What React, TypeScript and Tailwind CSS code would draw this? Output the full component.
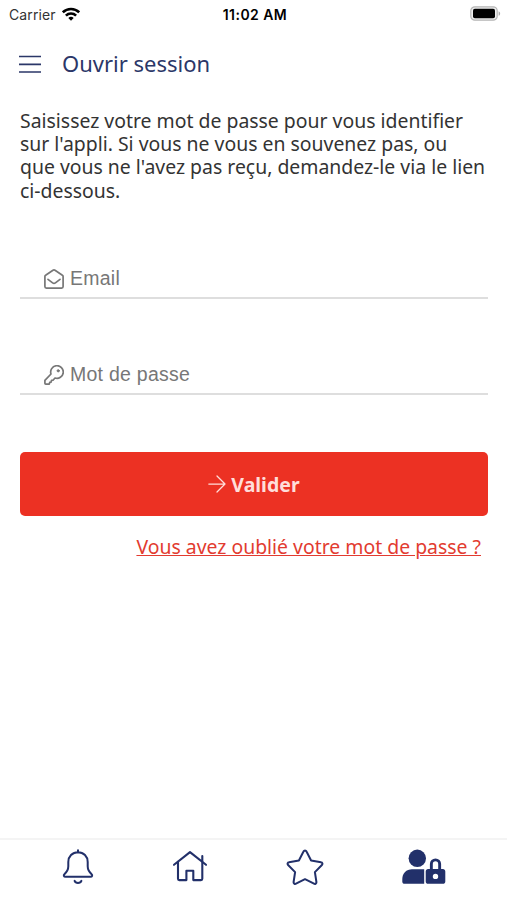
import React, { useState } from 'react';

interface IconProps {
    className?: string;
}

const MenuIcon: React.FC<IconProps> = ({ className }) => (
    <svg viewBox="0 0 22 18" className={className} fill="none" stroke="currentColor" strokeWidth="1.7">
        <path d="M0 1.500h22M0 9.400h22M0 17h22" />
    </svg>
);

const WifiIcon: React.FC<IconProps> = ({ className }) => (
    <svg viewBox="0 0 18 14" className={className} fill="none" stroke="currentColor" strokeWidth="2.6">
        <path d="M.8 5.3a11.8 11.8 0 0 1 16.4 0M3.9 8.6a7.3 7.3 0 0 1 10.2 0" />
        <path d="M9 13.8 6.3 11a3.9 3.9 0 0 1 5.4 0Z" fill="currentColor" stroke="none" />
    </svg>
);

const BatteryIcon: React.FC<IconProps> = ({ className }) => (
    <svg viewBox="0 0 31 15" className={className}>
        <rect x=".8" y=".8" width="26.4" height="13.4" rx="4" fill="#eee" stroke="#b5b5b5" strokeWidth="1.2" />
        <rect x="3" y="2.8" width="22" height="9.4" rx="1.8" fill="#000" />
        <path d="M28.6 5.2c2 .8 2 3.8 0 4.6z" fill="#aaa" />
    </svg>
);

const EnvelopeIcon: React.FC<IconProps> = ({ className }) => (
    <svg viewBox="0 0 20 20" className={className} fill="none" stroke="currentColor" strokeWidth="1.7" strokeLinecap="round" strokeLinejoin="round">
        <path d="M.9 7.6c0-.6.2-1 .7-1.3L9 1.200c.6-.4 1.400-.4 2 0l7.400 5.100c.5.300.7.700.7 1.300v10c0 .9-.6 1.500-1.500 1.500H2.400c-.9 0-1.500-.6-1.500-1.500z" />
        <path d="m4 10.300 4.600 3.600c.9.700 1.900.700 2.800 0l4.600-3.600" />
    </svg>
);

const KeyIcon: React.FC<IconProps> = ({ className }) => (
    <svg viewBox="0 0 20 20" className={className} fill="none" stroke="currentColor" strokeWidth="1.7" strokeLinecap="round" strokeLinejoin="round">
        <path d="M7 9A6.300 6.300 0 1 1 11 13l-2 2.200-1.500.2-.4 1.700-1.400.3-.4 1.700H1.700a.8.8 0 0 1-.8-.8v-2.900z" />
        <circle cx="14.200" cy="5.800" r="1.100" fill="currentColor" strokeWidth="1" />
    </svg>
);

const ArrowIcon: React.FC<IconProps> = ({ className }) => (
    <svg viewBox="0 0 18 18" className={className} fill="none" stroke="currentColor" strokeWidth="1.25" strokeLinecap="round" strokeLinejoin="round">
        <path d="M.8 9h16.1M9 1l8 8-8 8" />
    </svg>
);

const BellIcon: React.FC<IconProps> = ({ className }) => (
    <svg viewBox="0 0 32 36" className={className} fill="none" stroke="currentColor" strokeWidth="2" strokeLinecap="round" strokeLinejoin="round">
        <path d="M16 1.200v2.200M16 3.200c-5.700 0-9.700 4.300-9.700 9.700v4.400c0 3.500-1.300 5.500-3.700 7.700-1.500 1.400-.8 2.800 1 2.800h24.800c1.800 0 2.500-1.400 1-2.800-2.400-2.200-3.700-4.200-3.700-7.700v-4.400c0-5.400-4-9.700-9.700-9.700Z" />
        <path d="M12.600 31.900c.5 1.300 1.700 2.100 3.400 2.100s2.900-.8 3.400-2.100" />
    </svg>
);

const HomeIcon: React.FC<IconProps> = ({ className }) => (
    <svg viewBox="0 0 36 32" className={className} fill="none" stroke="currentColor" strokeWidth="2.1" strokeLinecap="round" strokeLinejoin="round">
        <path d="m2 14.800 16-12.700 16 12.700M30.300 11.800V6" />
        <path d="M6 11.700v17.100c0 .8.5 1.300 1.300 1.300h7.100v-9.300h6.900v9.300H29c.8 0 1.300-.5 1.300-1.300V11.800" />
    </svg>
);

const StarIcon: React.FC<IconProps> = ({ className }) => (
    <svg viewBox="0 0 38 36" className={className} fill="none" stroke="currentColor" strokeWidth="2" strokeLinejoin="round">
        <path d="M17.500 2.500c.6-1.300 2.400-1.300 3 0l4.600 9 9.900 1.700c1.400.2 1.900 1.800.9 2.800l-7 7.100 1.500 9.900c.2 1.400-1.200 2.400-2.400 1.700L19 30.200l-9 4.500c-1.200.7-2.600-.3-2.400-1.700l1.500-9.900-7-7.100c-1-1-.5-2.600.9-2.800l9.900-1.700Z" />
    </svg>
);

const UserLockIcon: React.FC<IconProps> = ({ className }) => (
    <svg viewBox="0 0 44 36" className={className} fill="currentColor">
        <circle cx="15.300" cy="9.300" r="8.700" />
        <path d="M10 20.200h12.200v14.600H2.600C1.100 34.800.3 34 .3 32.500v-2.600c0-5.600 4.100-9.700 9.700-9.700Z" />
        <path fillRule="evenodd" d="M26.100 20h1.800v-5a5.600 5.600 0 0 1 11.200 0v5h1.800c1.400 0 2.400 1 2.400 2.400v10c0 1.400-1 2.400-2.400 2.400H26.100c-1.400 0-2.400-1-2.400-2.400v-10c0-1.400 1-2.400 2.400-2.400Zm4.700 0h5.400v-5a2.700 2.700 0 0 0-5.400 0Zm2.700 4.700a2.700 2.700 0 1 0 0 5.400 2.700 2.700 0 0 0 0-5.400Z" />
    </svg>
);

interface FieldProps {
    type: string;
    label: string;
    value: string;
    onChange: (value: string) => void;
    icon: React.ReactNode;
}

const Field: React.FC<FieldProps> = ({ type, label, value, onChange, icon }) => (
    <label className="flex h-10 items-center gap-1.5 border-b-2 border-[#dedede] pt-0.5 pl-6 text-[#777]">
        {icon}
        <input
            type={type}
            value={value}
            onChange={(e) => onChange(e.target.value)}
            placeholder={label}
            aria-label={label}
            className="min-w-0 flex-1 font-['Liberation_Sans',sans-serif] text-[19.5px] tracking-[0.25px] outline-none placeholder:text-[#777]"
        />
    </label>
);

const App: React.FC = () => {
    const [email, setEmail] = useState('');
    const [password, setPassword] = useState('');

    return (
        <div className="flex h-screen flex-col bg-white font-['Noto_Sans',sans-serif]">
            <div className="grid h-[27px] grid-cols-3 items-center pr-1.5 pl-[9px] font-['Inter',sans-serif] text-[14px] text-black">
                <div className="flex items-center gap-1.5 pt-px tracking-[0.1px] text-[#333]">
                    Carrier
                    <WifiIcon className="h-3.5 w-[18px] text-black" />
                </div>
                <div className="pt-px text-center font-semibold tracking-[0.45px]">11:02 AM</div>
                <BatteryIcon className="h-[15px] w-[31px] justify-self-end" />
            </div>

            <header className="flex h-[72px] items-center gap-[21px] px-[19px] text-[#2b3768]">
                <button aria-label="Menu" className="pt-0.5">
                    <MenuIcon className="h-[18px] w-[22px]" />
                </button>
                <h1 className="text-[22px]">Ouvrir session</h1>
            </header>

            <main className="flex-1 pt-2.5 pr-[19px] pl-5">
                <p className="text-[19.42px] leading-[23.2px] whitespace-nowrap text-[#333]">
                    Saisissez votre mot de passe pour vous identifier<br />
                    sur l'appli. Si vous ne vous en souvenez pas, ou<br />
                    que vous ne l'avez pas reçu, demandez-le via le lien<br />
                    ci-dessous.
                </p>

                <form className="mt-[57px]" onSubmit={(e) => e.preventDefault()}>
                    <div className="flex flex-col gap-14">
                        <Field type="email" label="Email" value={email} onChange={setEmail} icon={<EnvelopeIcon className="size-5" />} />
                        <Field type="password" label="Mot de passe" value={password} onChange={setPassword} icon={<KeyIcon className="size-5" />} />
                    </div>
                    <button
                        type="submit"
                        className="mt-[57px] flex h-16 w-full items-center justify-center gap-[5px] rounded-[5px] bg-[#ec3123] pt-px text-[19.5px] font-bold text-[#ffdeda]"
                    >
                        <ArrowIcon className="size-[18px]" />
                        Valider
                    </button>
                </form>

                <div className="mt-4 pr-[7px] text-right text-[19.42px] leading-[30px] text-[#e23b30]">
                    <a href="#" className="whitespace-nowrap underline">Vous avez oublié votre mot de passe ?</a>
                </div>
            </main>

            <nav className="flex h-[62px] items-start justify-between border-t-2 border-[#f4f4f4] pt-[9px] pr-[61px] pl-[62px] text-[#22306a]">
                <button aria-label="Notifications"><BellIcon className="h-9 w-8" /></button>
                <button aria-label="Accueil" className="pt-px"><HomeIcon className="h-8 w-9" /></button>
                <button aria-label="Favoris"><StarIcon className="h-9 w-[38px]" /></button>
                <button aria-label="Compte"><UserLockIcon className="h-9 w-11" /></button>
            </nav>
        </div>
    );
};

export default App;
